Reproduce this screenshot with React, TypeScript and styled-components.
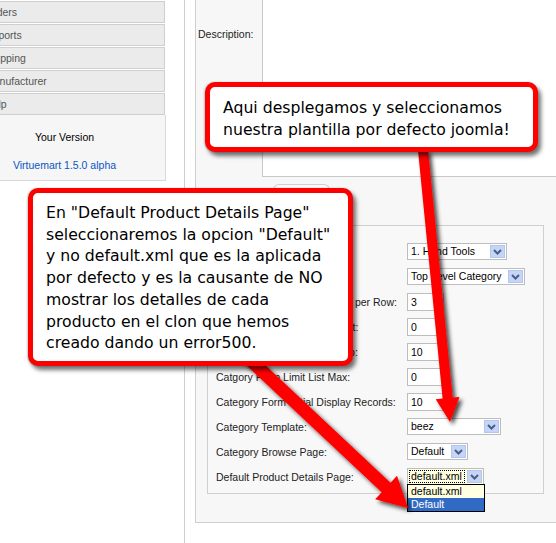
import React from 'react';
import styled, { createGlobalStyle } from 'styled-components';

const GlobalStyle = createGlobalStyle`
  html, body {
    margin: 0;
    padding: 0;
    background: #ffffff;
  }
  body {
    font-family: "Liberation Sans", Arial, sans-serif;
    font-size: 10.5px;
    color: #222;
  }
`;

const Page = styled.div`
  position: relative;
  display: flex;
  align-items: flex-start;
  width: 556px;
  height: 543px;
  overflow: hidden;
`;

/* left admin menu, scrolled partly out of view */
const Sidebar = styled.div`
  flex: 0 0 202px;
  margin-left: -36px;
  display: flex;
  flex-direction: column;
  gap: 1px;
  padding-top: 1px;
`;

const MenuItem = styled.div`
  height: 20px;
  margin-right: 1px;
  padding-left: 20px;
  border: 1px solid #cfcfcf;
  background: #ebebeb;
  color: #555;
  line-height: 20px;
  white-space: nowrap;
`;

const VersionBox = styled.div`
  margin-top: -1px;
  display: flex;
  flex-direction: column;
  align-items: center;
  gap: 15px;
  padding: 16px 0 8px;
  background: #f6f6f6;
  border-right: 1px solid #d8d8d8;
  border-bottom: 1px solid #d8d8d8;
  line-height: 13px;
  color: #000;
`;

const VersionLink = styled.a`
  color: #0b55c4;
  text-decoration: none;
`;

const Main = styled.div`
  flex: 0 0 auto;
  margin-left: 18px;
  height: 543px;
  padding-left: 10px;
  border-left: 1px solid #cfcfcf;
`;

const Panel = styled.div`
  box-sizing: border-box;
  width: 420px;
  height: 523px;
  background: #f7f7f7;
  border-left: 1px solid #cfcfcf;
  border-bottom: 1px solid #cfcfcf;
`;

const DescRow = styled.div`
  display: flex;
  height: 177px;
`;

const DescLabel = styled.div`
  flex: 0 0 64px;
  padding: 28px 0 0 2px;
  line-height: 13px;
  color: #222;
`;

const DescEditor = styled.div`
  flex: 1;
  background: #ffffff;
  border-left: 1px solid #c9c9c9;
  border-bottom: 1px solid #c9c9c9;
`;

const TabStrip = styled.div`
  display: flex;
  margin-top: 7px;
  padding-left: 77px;
`;

const Tab = styled.div`
  width: 55px;
  height: 22px;
  border: 1px solid #cfcfcf;
  border-bottom: none;
  border-radius: 6px 6px 0 0;
  background: #f9f9f9;
`;

const Fieldset = styled.div`
  box-sizing: border-box;
  width: 337px;
  margin: 18px 0 0 11px;
  padding: 13px 0 4px 8px;
  border: 1px solid #cfcfcf;
  background: #f8f8f8;
`;

const FormRow = styled.div`
  display: flex;
  align-items: center;
  height: 25px;
`;

const FieldLabel = styled.div`
  flex: 0 0 191px;
  white-space: nowrap;
  color: #222;
`;

const TextInput = styled.input`
  box-sizing: border-box;
  width: 37px;
  height: 18px;
  margin: 0;
  padding: 0 0 0 3px;
  border: 1px solid #bdbdbd;
  background: #ffffff;
  font: inherit;
  color: #000;
  outline: none;
`;

const Select = styled.div<{ $w: number; $focused?: boolean }>`
  position: relative;
  display: flex;
  align-items: center;
  box-sizing: border-box;
  width: ${p => p.$w}px;
  height: 17px;
  padding: 1px;
  border: 1px solid #bdbdbd;
  background: ${p => (p.$focused ? '#ffffe1' : '#ffffff')};
  color: #000;
`;

const SelectValue = styled.span<{ $focused?: boolean }>`
  flex: 1;
  min-width: 0;
  height: 13px;
  margin-right: 2px;
  padding-left: 2px;
  line-height: 13px;
  white-space: nowrap;
  overflow: hidden;
  ${p => p.$focused && 'outline: 1px dotted #000; outline-offset: -1px;'}
`;

const DropButton = styled.span`
  display: flex;
  align-items: center;
  justify-content: center;
  box-sizing: border-box;
  flex: 0 0 15px;
  height: 13px;
  border: 1px solid #b4c6ee;
  background: #c5d5f7;
`;

const OptionList = styled.div`
  position: absolute;
  top: 15px;
  left: -1px;
  z-index: 2;
  box-sizing: border-box;
  width: 78px;
  border: 1px solid #000;
  background: #ffffe1;
`;

const Option = styled.div<{ $active?: boolean }>`
  height: 13px;
  padding-left: 3px;
  line-height: 13px;
  background: ${p => (p.$active ? '#316ac5' : 'transparent')};
  color: ${p => (p.$active ? '#ffffff' : '#000')};
`;

const ArrowLayer = styled.svg`
  position: absolute;
  left: 0;
  top: 0;
  z-index: 3;
  pointer-events: none;
`;

const Callout = styled.div<{ $x: number; $y: number; $w: number; $h: number; $pt: number }>`
  position: absolute;
  left: ${p => p.$x}px;
  top: ${p => p.$y}px;
  width: ${p => p.$w}px;
  height: ${p => p.$h}px;
  z-index: 4;
  box-sizing: border-box;
  padding: ${p => p.$pt}px 12px 0 13px;
  border: 5px solid #ff0000;
  border-radius: 10px;
  background: #ffffff;
  box-shadow: 3px 4px 4px rgba(0, 0, 0, 0.55), -1px 0 2px rgba(0, 0, 0, 0.2);
  font-family: "DejaVu Sans", Verdana, sans-serif;
  font-size: 15.7px;
  line-height: 21.7px;
  color: #000;
  white-space: pre-line;
`;

const Chevron = () => (
  <svg width="9" height="6" viewBox="0 0 9 6">
    <path d="M1 1 L4.5 4.5 L8 1" fill="none" stroke="#4b5d84" strokeWidth="2" />
  </svg>
);

type SelectBoxProps = { width: number; value: string; focused?: boolean; options?: string[]; active?: string };

const SelectBox: React.FC<SelectBoxProps> = ({ width, value, focused, options, active }) => (
  <Select $w={width} $focused={focused}>
    <SelectValue $focused={focused}>{value}</SelectValue>
    <DropButton>
      <Chevron />
    </DropButton>
    {options && (
      <OptionList>
        {options.map(o => (
          <Option key={o} $active={o === active}>
            {o}
          </Option>
        ))}
      </OptionList>
    )}
  </Select>
);

const menu = ['Orders', 'Reports', 'Shipping', 'Manufacturer', 'Help'];

const App: React.FC = () => {
  return (
    <>
      <GlobalStyle />
      <Page>
        <Sidebar>
          {menu.map(m => (
            <MenuItem key={m}>{m}</MenuItem>
          ))}
          <VersionBox>
            <span>Your Version</span>
            <VersionLink href="#">Virtuemart 1.5.0 alpha</VersionLink>
          </VersionBox>
        </Sidebar>

        <Main>
          <Panel>
            <DescRow>
              <DescLabel>Description:</DescLabel>
              <DescEditor />
            </DescRow>
            <TabStrip>
              <Tab />
            </TabStrip>
            <Fieldset>
              <FormRow>
                <FieldLabel>List Order:</FieldLabel>
                <SelectBox width={100} value="1. Hand Tools" />
              </FormRow>
              <FormRow>
                <FieldLabel>Parent:</FieldLabel>
                <SelectBox width={118} value="Top Level Category" />
              </FormRow>
              <FormRow>
                <FieldLabel>Category Products Displayed per Row:</FieldLabel>
                <TextInput readOnly defaultValue="3" />
              </FormRow>
              <FormRow>
                <FieldLabel>Category Form Limit List Start:</FieldLabel>
                <TextInput readOnly defaultValue="0" />
              </FormRow>
              <FormRow>
                <FieldLabel>Category Form Limit List Step:</FieldLabel>
                <TextInput readOnly defaultValue="10" />
              </FormRow>
              <FormRow>
                <FieldLabel>Catgory Form Limit List Max:</FieldLabel>
                <TextInput readOnly defaultValue="0" />
              </FormRow>
              <FormRow>
                <FieldLabel>Category Form Initial Display Records:</FieldLabel>
                <TextInput readOnly defaultValue="10" />
              </FormRow>
              <FormRow>
                <FieldLabel>Category Template:</FieldLabel>
                <SelectBox width={94} value="beez" />
              </FormRow>
              <FormRow>
                <FieldLabel>Category Browse Page:</FieldLabel>
                <SelectBox width={61} value="Default" />
              </FormRow>
              <FormRow>
                <FieldLabel>Default Product Details Page:</FieldLabel>
                <SelectBox
                  width={77}
                  value="default.xml"
                  focused
                  options={['default.xml', 'Default']}
                  active="Default"
                />
              </FormRow>
            </Fieldset>
          </Panel>
        </Main>

        <ArrowLayer width="556" height="543" viewBox="0 0 556 543">
          <defs>
            <filter id="arrowShadow" x="-20%" y="-20%" width="140%" height="140%">
              <feDropShadow dx="3" dy="3" stdDeviation="2" floodColor="#000" floodOpacity="0.7" />
            </filter>
          </defs>
          <polygon
            points="418,150.5 428,149.5 452.6,397.6 459.5,396.9 450,422 435.7,399.3 442.6,398.6"
            fill="#ff0000"
            filter="url(#arrowShadow)"
          />
          <polygon
            points="240.6,359.7 249.4,350.3 390.5,482.8 397,475.8 408,508 375.2,499.2 381.7,492.2"
            fill="#ff0000"
            filter="url(#arrowShadow)"
          />
        </ArrowLayer>

        <Callout $x={205} $y={82} $w={333} $h={70} $pt={10}>
          {'Aqui desplegamos y seleccionamos\nnuestra plantilla por defecto joomla!'}
        </Callout>
        <Callout $x={28} $y={188} $w={325} $h={178} $pt={9}>
          {
            'En "Default Product Details Page"\nseleccionaremos la opcion "Default"\ny no default.xml que es la aplicada\npor defecto y es la causante de NO\nmostrar los detalles de cada\nproducto en el clon que hemos\ncreado dando un error500.'
          }
        </Callout>
      </Page>
    </>
  );
};

export default App;
